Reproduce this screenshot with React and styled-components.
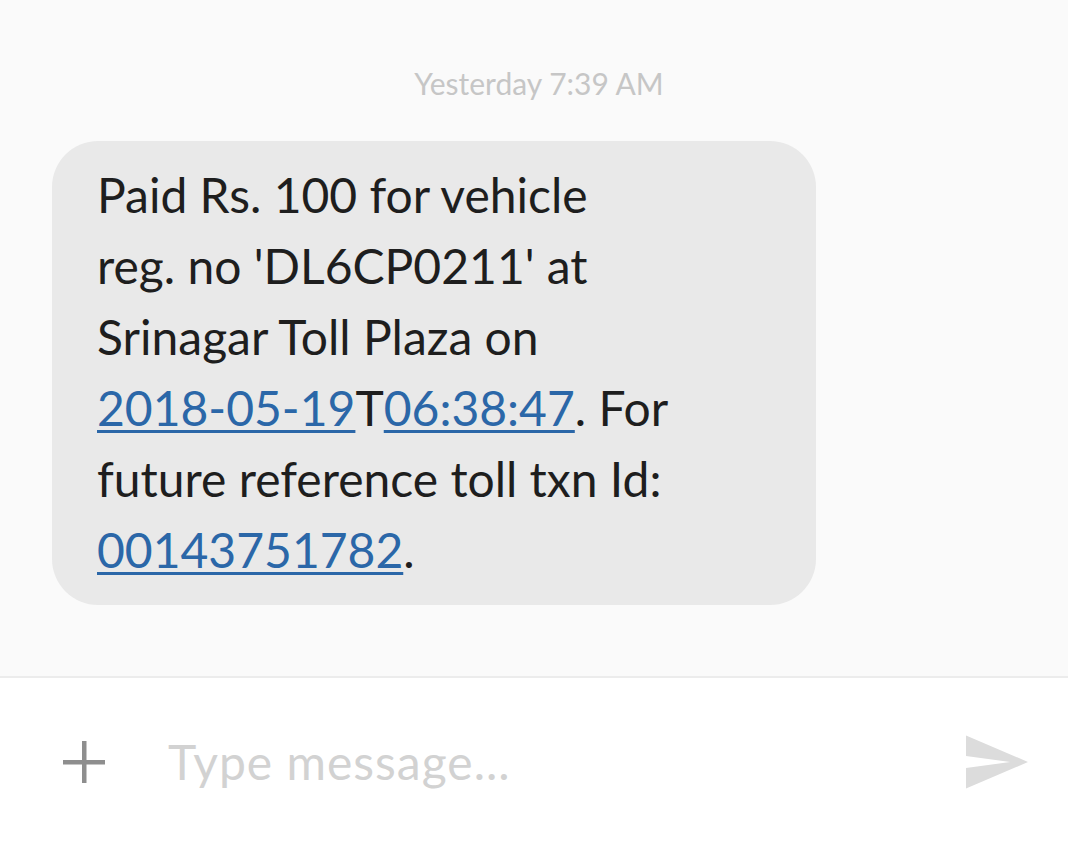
import React from "react";
import styled, { createGlobalStyle } from "styled-components";

const Global = createGlobalStyle`
  html, body { margin: 0; padding: 0; background: #fafafa; }
  body { font-family: Lato, "Noto Sans", sans-serif; }
`;

const Screen = styled.div`
  width: 1068px;
  height: 846px;
  display: flex;
  flex-direction: column;
  overflow: hidden;
`;

const Thread = styled.div`
  height: 676px;
  background: #fafafa;
  display: flex;
  flex-direction: column;
  padding: 65px 0 0 0;
  box-sizing: border-box;
`;

const Stamp = styled.div`
  align-self: center;
  margin-left: 10px;
  font-size: 30px;
  line-height: 36px;
  color: #c6c6c6;
`;

const Bubble = styled.div`
  margin: 40px 0 0 52px;
  width: 764px;
  height: 464px;
  box-sizing: border-box;
  background: #e9e9e9;
  border-radius: 46px;
  padding: 18px 0 0 45px;
  font-size: 48px;
  line-height: 71px;
  color: #1e1e1e;
`;

const Link = styled.a`
  color: #2b67a8;
  text-decoration: underline;
  text-decoration-thickness: 2.5px;
  text-underline-offset: 4px;
`;

const Composer = styled.div`
  flex: 1;
  background: #fff;
  border-top: 2px solid #ececec;
  display: flex;
  align-items: center;
  padding: 0 40px 0 63px;
`;

const Plus = styled.svg`
  width: 42px;
  height: 42px;
  flex: none;
`;

const Placeholder = styled.div`
  flex: 1;
  margin-left: 63px;
  font-size: 48px;
  line-height: 60px;
  color: #d2d2d2;
  letter-spacing: 1px;
`;

const Send = styled.svg`
  width: 62px;
  height: 54px;
  flex: none;
`;

export default function App() {
  return (
    <>
      <Global />
      <Screen>
        <Thread>
          <Stamp>Yesterday 7:39 AM</Stamp>
          <Bubble>
            Paid Rs. 100 for vehicle
            <br />
            reg. no 'DL6CP0211' at
            <br />
            Srinagar Toll Plaza on
            <br />
            <Link>2018-05-19</Link>T<Link>06:38:47</Link>. For
            <br />
            future reference toll txn Id:
            <br />
            <Link>00143751782</Link>.
          </Bubble>
        </Thread>
        <Composer>
          <Plus viewBox="0 0 42 42">
            <rect x="0" y="19" width="42" height="4.5" fill="#8e8e8e" />
            <rect x="19" y="0" width="4.5" height="42" fill="#8e8e8e" />
          </Plus>
          <Placeholder>Type message...</Placeholder>
          <Send viewBox="2 3 21 18">
            <path d="M2.01 21L23 12 2.01 3 2 10l15 2-15 2z" fill="#dcdcdc" />
          </Send>
        </Composer>
      </Screen>
    </>
  );
}
